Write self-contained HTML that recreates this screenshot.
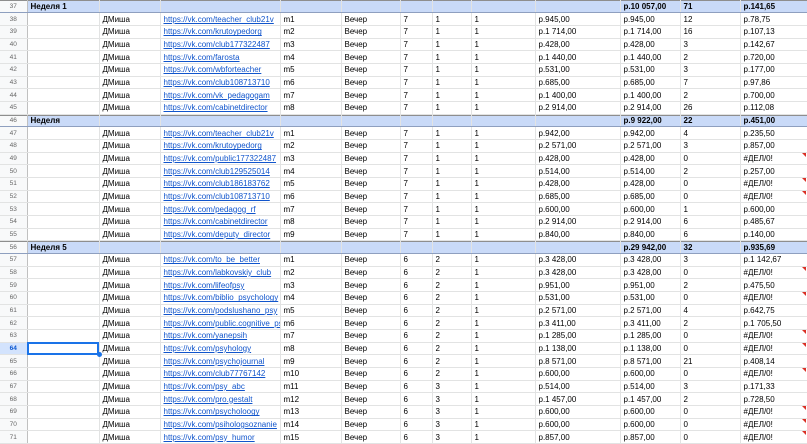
<!DOCTYPE html>
<html><head><meta charset="utf-8"><style>
html,body{margin:0;padding:0;background:#fff;width:807px;height:444px;overflow:hidden}
table{border-collapse:collapse;table-layout:fixed;width:807px;font-family:"Liberation Sans",Arial,sans-serif;font-size:8px;color:#000}
tr{height:12.68px}
td{height:12.68px;padding:0 0 0 3px;border-right:1px solid #e2e3e3;border-bottom:1px solid #e2e3e3;white-space:nowrap;overflow:hidden;line-height:11px;position:relative;box-sizing:border-box}
td.n{background:#f8f9fa;color:#666;font-size:6.5px;text-align:center;padding:0;border-right:1px solid #c0c0c0}
tr.h td{background:#c9daf8;font-weight:bold;border-bottom:1px solid #8e9fbf;box-shadow:inset 0 1px 0 #8e8e8e}
tr.h td.n{background:#f8f9fa;font-weight:normal}
a{color:#1155cc;text-decoration:underline}
td.e::after{content:"";position:absolute;right:1px;top:0;border-top:4px solid #d93025;border-left:4px solid transparent}
tr.s td.n{background:#d3e3fd;color:#0b57d0;font-weight:bold}
td.sel{outline:2px solid #1a73e8;outline-offset:-2px;overflow:visible}
td.sel::after{content:"";position:absolute;right:-3px;bottom:-3px;width:5px;height:5px;background:#1a73e8;border-radius:50%}
</style></head><body>
<table>
<colgroup><col style="width:27px"><col style="width:72px"><col style="width:61px"><col style="width:120px"><col style="width:61px"><col style="width:59px"><col style="width:32px"><col style="width:39px"><col style="width:64px"><col style="width:85px"><col style="width:60px"><col style="width:60px"><col style="width:67px"></colgroup>
<tr class="h"><td class="n">37</td><td>Неделя 1</td><td></td><td></td><td></td><td></td><td></td><td></td><td></td><td></td><td>р.10 057,00</td><td>71</td><td>р.141,65</td></tr>
<tr><td class="n">38</td><td></td><td>ДМиша</td><td><a>https://vk.com/teacher_club21v</a></td><td>m1</td><td>Вечер</td><td>7</td><td>1</td><td>1</td><td>р.945,00</td><td>р.945,00</td><td>12</td><td>р.78,75</td></tr>
<tr><td class="n">39</td><td></td><td>ДМиша</td><td><a>https://vk.com/krutoypedorg</a></td><td>m2</td><td>Вечер</td><td>7</td><td>1</td><td>1</td><td>р.1 714,00</td><td>р.1 714,00</td><td>16</td><td>р.107,13</td></tr>
<tr><td class="n">40</td><td></td><td>ДМиша</td><td><a>https://vk.com/club177322487</a></td><td>m3</td><td>Вечер</td><td>7</td><td>1</td><td>1</td><td>р.428,00</td><td>р.428,00</td><td>3</td><td>р.142,67</td></tr>
<tr><td class="n">41</td><td></td><td>ДМиша</td><td><a>https://vk.com/farosta</a></td><td>m4</td><td>Вечер</td><td>7</td><td>1</td><td>1</td><td>р.1 440,00</td><td>р.1 440,00</td><td>2</td><td>р.720,00</td></tr>
<tr><td class="n">42</td><td></td><td>ДМиша</td><td><a>https://vk.com/wbforteacher</a></td><td>m5</td><td>Вечер</td><td>7</td><td>1</td><td>1</td><td>р.531,00</td><td>р.531,00</td><td>3</td><td>р.177,00</td></tr>
<tr><td class="n">43</td><td></td><td>ДМиша</td><td><a>https://vk.com/club108713710</a></td><td>m6</td><td>Вечер</td><td>7</td><td>1</td><td>1</td><td>р.685,00</td><td>р.685,00</td><td>7</td><td>р.97,86</td></tr>
<tr><td class="n">44</td><td></td><td>ДМиша</td><td><a>https://vk.com/vk_pedagogam</a></td><td>m7</td><td>Вечер</td><td>7</td><td>1</td><td>1</td><td>р.1 400,00</td><td>р.1 400,00</td><td>2</td><td>р.700,00</td></tr>
<tr><td class="n">45</td><td></td><td>ДМиша</td><td><a>https://vk.com/cabinetdirector</a></td><td>m8</td><td>Вечер</td><td>7</td><td>1</td><td>1</td><td>р.2 914,00</td><td>р.2 914,00</td><td>26</td><td>р.112,08</td></tr>
<tr class="h"><td class="n">46</td><td>Неделя</td><td></td><td></td><td></td><td></td><td></td><td></td><td></td><td></td><td>р.9 922,00</td><td>22</td><td>р.451,00</td></tr>
<tr><td class="n">47</td><td></td><td>ДМиша</td><td><a>https://vk.com/teacher_club21v</a></td><td>m1</td><td>Вечер</td><td>7</td><td>1</td><td>1</td><td>р.942,00</td><td>р.942,00</td><td>4</td><td>р.235,50</td></tr>
<tr><td class="n">48</td><td></td><td>ДМиша</td><td><a>https://vk.com/krutoypedorg</a></td><td>m2</td><td>Вечер</td><td>7</td><td>1</td><td>1</td><td>р.2 571,00</td><td>р.2 571,00</td><td>3</td><td>р.857,00</td></tr>
<tr><td class="n">49</td><td></td><td>ДМиша</td><td><a>https://vk.com/public177322487</a></td><td>m3</td><td>Вечер</td><td>7</td><td>1</td><td>1</td><td>р.428,00</td><td>р.428,00</td><td>0</td><td class="e">#ДЕЛ/0!</td></tr>
<tr><td class="n">50</td><td></td><td>ДМиша</td><td><a>https://vk.com/club129525014</a></td><td>m4</td><td>Вечер</td><td>7</td><td>1</td><td>1</td><td>р.514,00</td><td>р.514,00</td><td>2</td><td>р.257,00</td></tr>
<tr><td class="n">51</td><td></td><td>ДМиша</td><td><a>https://vk.com/club186183762</a></td><td>m5</td><td>Вечер</td><td>7</td><td>1</td><td>1</td><td>р.428,00</td><td>р.428,00</td><td>0</td><td class="e">#ДЕЛ/0!</td></tr>
<tr><td class="n">52</td><td></td><td>ДМиша</td><td><a>https://vk.com/club108713710</a></td><td>m6</td><td>Вечер</td><td>7</td><td>1</td><td>1</td><td>р.685,00</td><td>р.685,00</td><td>0</td><td class="e">#ДЕЛ/0!</td></tr>
<tr><td class="n">53</td><td></td><td>ДМиша</td><td><a>https://vk.com/pedagog_rf</a></td><td>m7</td><td>Вечер</td><td>7</td><td>1</td><td>1</td><td>р.600,00</td><td>р.600,00</td><td>1</td><td>р.600,00</td></tr>
<tr><td class="n">54</td><td></td><td>ДМиша</td><td><a>https://vk.com/cabinetdirector</a></td><td>m8</td><td>Вечер</td><td>7</td><td>1</td><td>1</td><td>р.2 914,00</td><td>р.2 914,00</td><td>6</td><td>р.485,67</td></tr>
<tr><td class="n">55</td><td></td><td>ДМиша</td><td><a>https://vk.com/deputy_director</a></td><td>m9</td><td>Вечер</td><td>7</td><td>1</td><td>1</td><td>р.840,00</td><td>р.840,00</td><td>6</td><td>р.140,00</td></tr>
<tr class="h"><td class="n">56</td><td>Неделя 5</td><td></td><td></td><td></td><td></td><td></td><td></td><td></td><td></td><td>р.29 942,00</td><td>32</td><td>р.935,69</td></tr>
<tr><td class="n">57</td><td></td><td>ДМиша</td><td><a>https://vk.com/to_be_better</a></td><td>m1</td><td>Вечер</td><td>6</td><td>2</td><td>1</td><td>р.3 428,00</td><td>р.3 428,00</td><td>3</td><td>р.1 142,67</td></tr>
<tr><td class="n">58</td><td></td><td>ДМиша</td><td><a>https://vk.com/labkovskiy_club</a></td><td>m2</td><td>Вечер</td><td>6</td><td>2</td><td>1</td><td>р.3 428,00</td><td>р.3 428,00</td><td>0</td><td class="e">#ДЕЛ/0!</td></tr>
<tr><td class="n">59</td><td></td><td>ДМиша</td><td><a>https://vk.com/lifeofpsy</a></td><td>m3</td><td>Вечер</td><td>6</td><td>2</td><td>1</td><td>р.951,00</td><td>р.951,00</td><td>2</td><td>р.475,50</td></tr>
<tr><td class="n">60</td><td></td><td>ДМиша</td><td><a>https://vk.com/biblio_psychology</a></td><td>m4</td><td>Вечер</td><td>6</td><td>2</td><td>1</td><td>р.531,00</td><td>р.531,00</td><td>0</td><td class="e">#ДЕЛ/0!</td></tr>
<tr><td class="n">61</td><td></td><td>ДМиша</td><td><a>https://vk.com/podslushano_psy</a></td><td>m5</td><td>Вечер</td><td>6</td><td>2</td><td>1</td><td>р.2 571,00</td><td>р.2 571,00</td><td>4</td><td>р.642,75</td></tr>
<tr><td class="n">62</td><td></td><td>ДМиша</td><td><a>https://vk.com/public.cognitive_psy</a></td><td>m6</td><td>Вечер</td><td>6</td><td>2</td><td>1</td><td>р.3 411,00</td><td>р.3 411,00</td><td>2</td><td>р.1 705,50</td></tr>
<tr><td class="n">63</td><td></td><td>ДМиша</td><td><a>https://vk.com/yanepsih</a></td><td>m7</td><td>Вечер</td><td>6</td><td>2</td><td>1</td><td>р.1 285,00</td><td>р.1 285,00</td><td>0</td><td class="e">#ДЕЛ/0!</td></tr>
<tr class="s"><td class="n">64</td><td class="sel"></td><td>ДМиша</td><td><a>https://vk.com/psyhology</a></td><td>m8</td><td>Вечер</td><td>6</td><td>2</td><td>1</td><td>р.1 138,00</td><td>р.1 138,00</td><td>0</td><td class="e">#ДЕЛ/0!</td></tr>
<tr><td class="n">65</td><td></td><td>ДМиша</td><td><a>https://vk.com/psychojournal</a></td><td>m9</td><td>Вечер</td><td>6</td><td>2</td><td>1</td><td>р.8 571,00</td><td>р.8 571,00</td><td>21</td><td>р.408,14</td></tr>
<tr><td class="n">66</td><td></td><td>ДМиша</td><td><a>https://vk.com/club77767142</a></td><td>m10</td><td>Вечер</td><td>6</td><td>2</td><td>1</td><td>р.600,00</td><td>р.600,00</td><td>0</td><td class="e">#ДЕЛ/0!</td></tr>
<tr><td class="n">67</td><td></td><td>ДМиша</td><td><a>https://vk.com/psy_abc</a></td><td>m11</td><td>Вечер</td><td>6</td><td>3</td><td>1</td><td>р.514,00</td><td>р.514,00</td><td>3</td><td>р.171,33</td></tr>
<tr><td class="n">68</td><td></td><td>ДМиша</td><td><a>https://vk.com/pro.gestalt</a></td><td>m12</td><td>Вечер</td><td>6</td><td>3</td><td>1</td><td>р.1 457,00</td><td>р.1 457,00</td><td>2</td><td>р.728,50</td></tr>
<tr><td class="n">69</td><td></td><td>ДМиша</td><td><a>https://vk.com/psycholoogy</a></td><td>m13</td><td>Вечер</td><td>6</td><td>3</td><td>1</td><td>р.600,00</td><td>р.600,00</td><td>0</td><td class="e">#ДЕЛ/0!</td></tr>
<tr><td class="n">70</td><td></td><td>ДМиша</td><td><a>https://vk.com/psihologsoznanie</a></td><td>m14</td><td>Вечер</td><td>6</td><td>3</td><td>1</td><td>р.600,00</td><td>р.600,00</td><td>0</td><td class="e">#ДЕЛ/0!</td></tr>
<tr><td class="n">71</td><td></td><td>ДМиша</td><td><a>https://vk.com/psy_humor</a></td><td>m15</td><td>Вечер</td><td>6</td><td>3</td><td>1</td><td>р.857,00</td><td>р.857,00</td><td>0</td><td class="e">#ДЕЛ/0!</td></tr>
</table>
</body></html>
